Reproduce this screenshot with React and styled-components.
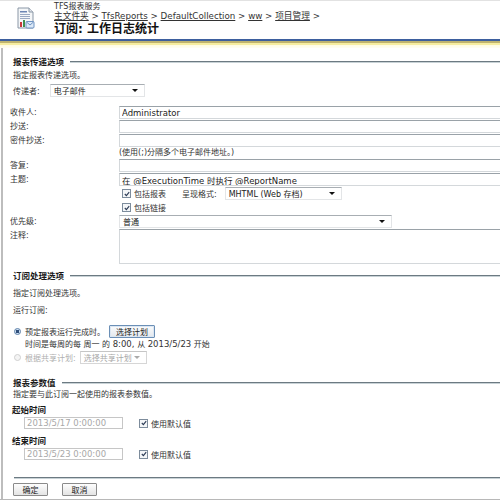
import React from 'react';
import styled, {createGlobalStyle} from 'styled-components';

const GlobalStyle = createGlobalStyle`
  html, body {
    margin: 0;
    padding: 0;
    background: #ffffff;
  }
  body {
    width: 500px;
    height: 500px;
    overflow: hidden;
    font-family: 'DejaVu Sans', 'Noto Sans CJK SC', sans-serif;
    font-size: 8px;
    color: #222;
  }
`;

function ReportIcon() {
  return (
    <svg width="20" height="24" viewBox="0 0 20 24">
      <path d="M2 1 H13 L17 5 V21 H2 Z" fill="#f4f6f8" stroke="#8a97a6" strokeWidth="1" />
      <path d="M13 1 V5 H17" fill="#dfe4ea" stroke="#8a97a6" strokeWidth="1" />
      <rect x="4" y="4" width="7" height="1.5" fill="#6d86b3" />
      <rect x="4" y="7" width="10" height="1" fill="#9aa9c2" />
      <rect x="4" y="9" width="10" height="1" fill="#9aa9c2" />
      <rect x="4" y="11" width="10" height="1" fill="#9aa9c2" />
      <rect x="4" y="15" width="2" height="5" fill="#c8373a" />
      <rect x="7" y="13" width="2" height="7" fill="#3f8f4f" />
      <rect x="10" y="14.5" width="8" height="6.5" rx="1" fill="#dce9f7" stroke="#6f93c2" strokeWidth="1" />
      <path d="M10.5 15 L14 18 L17.5 15" fill="none" stroke="#6f93c2" strokeWidth="1" />
    </svg>
  );
}

function CheckMark() {
  return (
    <svg width="6" height="6" viewBox="0 0 6 6">
      <path d="M0.8 3 L2.4 4.6 L5.2 1.2" fill="none" stroke="#2b3a55" strokeWidth="1.1" />
    </svg>
  );
}

function App() {
  return (
    <Page>
      <GlobalStyle />
      <Header>
        <LogoBox>
          <ReportIcon />
        </LogoBox>
        <TitleBlock>
          <ServiceName>TFS报表服务</ServiceName>
          <Breadcrumb>
            <Crumb>主文件夹</Crumb> &gt; <Crumb>TfsReports</Crumb> &gt; <Crumb>DefaultCollection</Crumb> &gt;{' '}
            <Crumb>ww</Crumb> &gt; <Crumb>项目管理</Crumb> &gt;
          </Breadcrumb>
          <PageTitle>订阅: 工作日志统计</PageTitle>
        </TitleBlock>
      </Header>
      <Band />

      <Main>
        <SectionHeading>报表传递选项</SectionHeading>
        <Desc top={2}>指定报表传递选项。</Desc>
        <InlineRow indent={3} top={2}>
          <span>传递者:</span>
          <Select width={95}>
            <span>电子邮件</span>
            <Arrow />
          </Select>
        </InlineRow>

        <FormGrid>
          <Label>收件人:</Label>
          <TextBox readOnly defaultValue="Administrator" />
          <Label>抄送:</Label>
          <TextBox readOnly defaultValue="" />
          <Label>密件抄送:</Label>
          <TextBox readOnly defaultValue="" />
          <Label />
          <Hint>(使用(;)分隔多个电子邮件地址。)</Hint>
          <Label>答复:</Label>
          <TextBox readOnly defaultValue="" />
          <Label>主题:</Label>
          <TextBox readOnly defaultValue="在 @ExecutionTime 时执行 @ReportName" />
          <Label />
          <CheckLine>
            <CheckBox>
              <CheckMark />
            </CheckBox>
            <span>包括报表</span>
            <FormatLabel>呈现格式:</FormatLabel>
            <Select width={117}>
              <span>MHTML (Web 存档)</span>
              <Arrow />
            </Select>
          </CheckLine>
          <Label />
          <CheckLine>
            <CheckBox>
              <CheckMark />
            </CheckBox>
            <span>包括链接</span>
          </CheckLine>
          <Label>优先级:</Label>
          <Select width={273}>
            <span>普通</span>
            <Arrow />
          </Select>
          <Label>注释:</Label>
          <Comment readOnly defaultValue="" />
        </FormGrid>

        <SectionHeading top={6}>订阅处理选项</SectionHeading>
        <Desc top={6}>指定订阅处理选项。</Desc>
        <Desc top={5}>运行订阅:</Desc>
        <RadioRow top={8}>
          <Radio checked />
          <RadioText>预定报表运行完成时。</RadioText>
          <PlanButton>选择计划</PlanButton>
        </RadioRow>
        <ScheduleText>
          时间是每周的每 周一 的 <b>8:00, </b>从 <b>2013/5/23</b> 开始
        </ScheduleText>
        <RadioRow top={1} disabled>
          <Radio />
          <span>根据共享计划:</span>
          <Select width={67} disabled>
            <span>选择共享计划</span>
            <Arrow disabled />
          </Select>
        </RadioRow>

        <SectionHeading top={13}>报表参数值</SectionHeading>
        <Desc>指定要与此订阅一起使用的报表参数值。</Desc>
        <ParamName>起始时间</ParamName>
        <ParamRow>
          <ParamInput readOnly disabled defaultValue="2013/5/17 0:00:00" />
          <CheckBox>
            <CheckMark />
          </CheckBox>
          <span>使用默认值</span>
        </ParamRow>
        <ParamName top={6}>结束时间</ParamName>
        <ParamRow>
          <ParamInput readOnly disabled defaultValue="2013/5/23 0:00:00" />
          <CheckBox>
            <CheckMark />
          </CheckBox>
          <span>使用默认值</span>
        </ParamRow>

        <Divider />
        <ButtonBar>
          <ActionButton>确定</ActionButton>
          <ActionButton>取消</ActionButton>
        </ButtonBar>
      </Main>
    </Page>
  );
}

const Page = styled.div`
  width: 500px;
  height: 500px;
  overflow: hidden;
  position: relative;
  border-bottom: 1px solid #b8b8b8;
  box-sizing: border-box;
`;

const Header = styled.header`
  height: 39px;
  display: flex;
  border-top: 1px solid #e2e2e2;
  box-sizing: border-box;
`;

const LogoBox = styled.div`
  width: 54px;
  padding: 6px 0 0 16px;
  box-sizing: border-box;
`;

const TitleBlock = styled.div`
  display: flex;
  flex-direction: column;
  padding-top: 1px;
`;

const ServiceName = styled.div`
  font-size: 8px;
  line-height: 9px;
  color: #333;
`;

const Breadcrumb = styled.div`
  font-size: 8.7px;
  line-height: 11px;
  color: #333;
  white-space: nowrap;
`;

const Crumb = styled.span`
  text-decoration: underline;
`;

const PageTitle = styled.div`
  font-size: 12px;
  font-weight: bold;
  line-height: 14px;
  color: #111;
`;

const Band = styled.div`
  height: 9px;
  background: linear-gradient(
    to bottom,
    #3d5f9e 0,
    #3d5f9e 2px,
    #bfb36f 2px,
    #bfb36f 4px,
    #f6eda1 4px,
    #f6eda1 6px,
    #fffbe3 6px,
    #fffdf3 9px
  );
`;

const Main = styled.main`
  margin-left: 1px;
  border-left: 2px solid #bdbdbd;
  padding: 8px 0 0 7px;
  height: 460px;
  box-sizing: border-box;
`;

const SectionHeading = styled.div`
  display: flex;
  align-items: center;
  gap: 6px;
  margin: ${({top}) => top || 0}px 0 0 3px;
  font-weight: bold;
  font-size: 8.5px;
  line-height: 12px;
  color: #1a1a1a;
  white-space: nowrap;

  &::after {
    content: '';
    flex: 1;
    border-top: 1px solid #6c7a82;
    border-bottom: 1px solid #c8d2d6;
  }
`;

const Desc = styled.div`
  margin: ${({top}) => top || 0}px 0 0 3px;
  line-height: 12px;
  color: #333;
`;

const InlineRow = styled.div`
  display: flex;
  align-items: center;
  gap: 10px;
  height: 13px;
  margin: ${({top}) => top || 0}px 0 0 ${({indent}) => indent || 0}px;
  color: #333;
`;

const FormGrid = styled.div`
  display: grid;
  grid-template-columns: 109px 400px;
  row-gap: 1px;
  margin-top: 9px;
  align-items: center;
`;

const Label = styled.div`
  color: #333;
  line-height: 13px;
  align-self: start;
`;

const TextBox = styled.input`
  box-sizing: border-box;
  width: 400px;
  height: 13px;
  margin: 0;
  padding: 0 2px;
  font: inherit;
  font-size: 8.5px;
  color: #222;
  background: #fff;
  border: 1px solid #d4d8db;
  border-top-color: #9aa2a8;
  outline: none;
`;

const Hint = styled.div`
  height: 10px;
  line-height: 10px;
  color: #333;
`;

const CheckLine = styled.div`
  display: flex;
  align-items: center;
  height: 13px;
  padding-left: 3px;
  gap: 3px;
  color: #333;
`;

const FormatLabel = styled.span`
  margin: 0 5px 0 13px;
`;

const CheckBox = styled.span`
  display: inline-flex;
  align-items: center;
  justify-content: center;
  width: 7px;
  height: 7px;
  border: 1px solid #7d8c9c;
  background: #f4f6f8;
`;

const Select = styled.div`
  box-sizing: border-box;
  width: ${({width}) => width}px;
  height: 13px;
  display: flex;
  align-items: center;
  justify-content: space-between;
  padding: 0 6px 0 3px;
  background: #fff;
  border: 1px solid ${({disabled}) => (disabled ? '#d6d6d6' : '#e3e5e7')};
  border-top-color: ${({disabled}) => (disabled ? '#c6c6c6' : '#a8aeb3')};
  color: ${({disabled}) => (disabled ? '#a8a8a8' : '#222')};
  white-space: nowrap;
`;

const Arrow = styled.span`
  width: 0;
  height: 0;
  border-left: 3px solid transparent;
  border-right: 3px solid transparent;
  border-top: 3px solid ${({disabled}) => (disabled ? '#aaa' : '#111')};
`;

const Comment = styled.textarea`
  box-sizing: border-box;
  width: 400px;
  height: 35px;
  margin: 0;
  padding: 0;
  resize: none;
  border: 1px solid #d4d8db;
  border-top-color: #9aa2a8;
  outline: none;
`;

const RadioRow = styled.div`
  display: flex;
  align-items: center;
  height: 13px;
  margin: ${({top}) => top || 0}px 0 0 4px;
  gap: 4px;
  color: ${({disabled}) => (disabled ? '#b0b0b0' : '#333')};
`;

const Radio = styled.span`
  box-sizing: border-box;
  width: 7px;
  height: 7px;
  border-radius: 50%;
  border: 1px solid ${({checked}) => (checked ? '#5b7fa8' : '#d0d0d0')};
  background: ${({checked}) => (checked ? 'radial-gradient(circle, #2f4f7a 0 1.5px, #cfe0f2 2px)' : '#f4f4f4')};
`;

const RadioText = styled.span`
  margin-right: 0;
`;

const PlanButton = styled.button`
  box-sizing: border-box;
  height: 13px;
  width: 46px;
  padding: 0;
  font: inherit;
  color: #222;
  border: 1px solid #6b8fb6;
  border-radius: 1px;
  background: linear-gradient(#fbfcfd, #e3e8ee);
  box-shadow: inset 0 0 0 1px #dbe6f2;
`;

const ScheduleText = styled.div`
  margin: 1px 0 0 15px;
  line-height: 10px;
  color: #333;
  white-space: nowrap;

  b {
    font-weight: normal;
    font-size: 8.5px;
  }
`;

const ParamName = styled.div`
  margin: ${({top}) => top || 3}px 0 0 2px;
  font-weight: bold;
  font-size: 8.5px;
  line-height: 12px;
  color: #1a1a1a;
`;

const ParamRow = styled.div`
  display: flex;
  align-items: center;
  gap: 3px;
  height: 12px;
  margin: 1px 0 0 14px;
  color: #333;
`;

const ParamInput = styled.input`
  box-sizing: border-box;
  width: 99px;
  height: 12px;
  margin: 0 13px 0 0;
  padding: 0 2px;
  font: inherit;
  font-size: 8.5px;
  color: #a8a8a8;
  background: #fff;
  border: 1px solid #c6c6c6;
  outline: none;
`;

const Divider = styled.div`
  margin: 17px 0 0 4px;
  border-top: 1px solid #6c7a82;
  border-bottom: 1px solid #c8d2d6;
`;

const ButtonBar = styled.div`
  display: flex;
  gap: 14px;
  margin: 4px 0 0 3px;
`;

const ActionButton = styled.button`
  box-sizing: border-box;
  width: 35px;
  height: 13px;
  padding: 0;
  font: inherit;
  color: #222;
  border: 1px solid #8a8a8a;
  border-radius: 1px;
  background: linear-gradient(#fdfdfd, #e4e4e4);
`;

export default App;
